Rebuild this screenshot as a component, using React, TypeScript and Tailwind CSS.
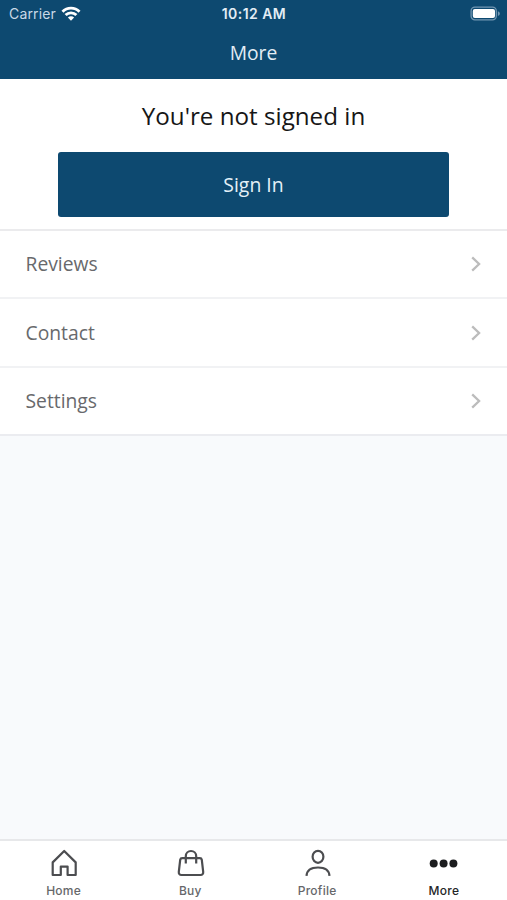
import type { ReactNode } from "react";

const rows = ["Reviews", "Contact", "Settings"];

function Wifi() {
  return (
    <svg width="20" height="16" viewBox="0 0 20 16" fill="none" stroke="#fff" strokeWidth="2.9">
      <path d="M1.5 5.7a12 12 0 0 1 17 0" />
      <path d="M4.6 9.1a7.6 7.6 0 0 1 10.8 0" />
      <path d="M10 14.7 6.9 11.6a4.4 4.4 0 0 1 6.2 0Z" fill="#fff" stroke="none" />
    </svg>
  );
}

function Battery() {
  return (
    <svg width="30" height="16" viewBox="0 0 30 16">
      <rect x="1.1" y="1.2" width="25.2" height="12.6" rx="3.8" fill="none" stroke="#7397b2" strokeWidth="1.3" />
      <rect x="2.8" y="2.9" width="22.2" height="9.2" rx="2" fill="#fff" />
      <path d="M27.9 5.2c2.6.9 2.6 3.9 0 4.8Z" fill="#7397b2" />
    </svg>
  );
}

function Chevron() {
  return (
    <svg width="10" height="16" viewBox="0 0 10 16" fill="none" stroke="#bcbcbc" strokeWidth="2.3">
      <path d="m1.2 1.4 6.9 6.6-6.9 6.6" />
    </svg>
  );
}

function TabIcon({ children }: { children: ReactNode }) {
  return (
    <svg
      className="ml-px"
      width="30"
      height="30"
      viewBox="0 0 30 30"
      fill="none"
      stroke="#4c4d50"
      strokeWidth="2.2"
      strokeLinejoin="round"
    >
      {children}
    </svg>
  );
}

const tabs = [
  {
    label: "Home",
    icon: <path d="M15.2 3 3.7 14.4V27h8.1V18.6h6.8V27h8.1V14.4Z" />,
  },
  {
    label: "Buy",
    icon: (
      <>
        <path d="M6.2 10.2h17.6c1.1 0 1.8.6 2 1.6l1.4 12.1c.2 1.9-.8 3.1-2.6 3.1H5.4c-1.8 0-2.8-1.2-2.6-3.1l1.4-12.1c.2-1 .9-1.6 2-1.6Z" />
        <path d="M9.8 15.5V8.2a5.2 5.2 0 0 1 10.4 0v7.3" />
      </>
    ),
  },
  {
    label: "Profile",
    icon: (
      <>
        <ellipse cx="15" cy="8.8" rx="5.4" ry="6" />
        <path d="M3.5 27.8c.4-5.4 4.5-8.3 11.5-8.3s11.1 2.9 11.5 8.3" />
      </>
    ),
  },
  {
    label: "More",
    icon: (
      <g fill="#1b1c1e" stroke="none">
        <circle cx="4.7" cy="15.4" r="4" />
        <circle cx="14.6" cy="15.4" r="4" />
        <circle cx="24.4" cy="15.4" r="4" />
      </g>
    ),
  },
];

export default function App() {
  return (
    <div className="flex h-[900px] w-full flex-col overflow-hidden bg-[#f8fafc] font-['Open_Sans',sans-serif]">
      <header className="h-[79px] shrink-0 bg-[#0d4970] text-[#e3edf5]">
        <div className="grid h-[27px] grid-cols-3 items-center pl-[9px] pr-[7px] font-['Inter',sans-serif]">
          <div className="flex items-center gap-[5px]">
            <span className="text-[14px] leading-[20px] tracking-[0.15px] text-[#c9d9e7]">Carrier</span>
            <Wifi />
          </div>
          <span className="pr-[1px] text-center text-[14px] leading-[20px] font-semibold tracking-[0.45px]">
            10:12 AM
          </span>
          <div className="flex justify-end">
            <Battery />
          </div>
        </div>
        <h1 className="text-center text-[19.3px] leading-[51px]">More</h1>
      </header>

      <section className="flex h-[152px] shrink-0 flex-col items-center border-b-2 border-[#ebebed] bg-white pt-[19px]">
        <h2 className="text-[24.2px] leading-[35px] text-[#161616]">You're not signed in</h2>
        <button className="mt-[19px] h-[65px] w-[391px] rounded-[3px] bg-[#0d4970] pt-px text-[19.4px] text-[#e3f0f8]">
          Sign In
        </button>
      </section>

      <ul className="shrink-0">
        {rows.map((row) => (
          <li
            key={row}
            className="flex h-[68.4px] items-center justify-between border-b-2 border-[#f1f2f4] bg-white pl-[25.5px] pr-[26px] text-[19.3px] text-[#68696c] last:border-[#ebecf0]"
          >
            <span className="pt-[1.5px]">{row}</span>
            <Chevron />
          </li>
        ))}
      </ul>

      <nav className="mt-auto grid h-[61px] shrink-0 grid-cols-4 border-t-2 border-[#e7e8ea] bg-white font-['Inter',sans-serif]">
        {tabs.map((tab) => (
          <div
            key={tab.label}
            className="flex flex-col items-center pt-[7px] pl-[0.5px] text-[12px] leading-[25px] font-medium tracking-[0.25px] text-[#66676a] last:text-[#242527]"
          >
            <TabIcon>{tab.icon}</TabIcon>
            {tab.label}
          </div>
        ))}
      </nav>
    </div>
  );
}
